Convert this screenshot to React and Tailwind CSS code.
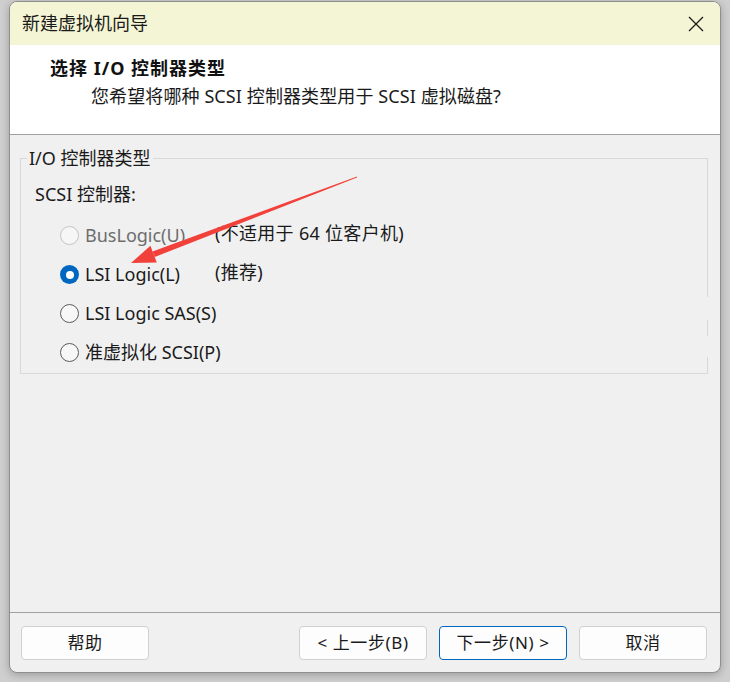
import React from 'react';

const font = { fontFamily: '"Noto Sans", "Noto Sans CJK SC", sans-serif' };

function Radio({ checked, disabled }) {
  if (checked) {
    return (
      <span className="w-[19px] h-[19px] rounded-full bg-[#0067c0] flex items-center justify-center shrink-0">
        <span className="w-[8px] h-[8px] rounded-full bg-white" />
      </span>
    );
  }
  return (
    <span
      className={
        'w-[19px] h-[19px] rounded-full border shrink-0 ' +
        (disabled ? 'border-[#c4c4c4] bg-[#f6f6f6]' : 'border-[#5c5c5c] bg-[#f7f7f7]')
      }
    />
  );
}

function Option({ label, note, checked, disabled }) {
  return (
    <div className="flex items-center h-[39px]">
      <div className="w-[194px] flex items-center gap-[6px] pl-[39px] shrink-0">
        <Radio checked={checked} disabled={disabled} />
        <span className={'whitespace-nowrap ' + (disabled ? 'text-[#6d6d6d]' : 'text-[#1a1a1a]')}>{label}</span>
      </div>
      {note && <span className="-mt-[5px] text-[#1a1a1a] whitespace-nowrap tracking-[0.3px]">{note}</span>}
    </div>
  );
}

function Btn({ children, primary }) {
  return (
    <button
      className={
        'w-[128px] h-[34px] rounded-[4px] bg-[#fdfdfd] text-[17px] text-[#1a1a1a] tracking-[0.6px] border ' +
        (primary ? 'border-[#0067c0]' : 'border-[#d0d0d0]')
      }
    >
      {children}
    </button>
  );
}

export default function App() {
  return (
    <div className="w-[730px] h-[682px] bg-[#cfcfcf] pl-[9px] pt-[1px] relative overflow-hidden" style={font}>
      <div className="w-[712px] h-[672px] rounded-[8px] border border-[#8f8f8f] bg-[#f0f0f0] overflow-hidden flex flex-col shadow-[0_2px_8px_rgba(0,0,0,0.25)]">
        {/* title bar */}
        <div className="h-[43px] bg-[#f4f5d4] flex items-center justify-between pl-[12px] pr-[16px] shrink-0">
          <span className="text-[18px] text-[#1a1a1a]">新建虚拟机向导</span>
          <svg width="16" height="16" viewBox="0 0 16 16" className="text-[#1a1a1a]">
            <path d="M1 1 L15 15 M15 1 L1 15" stroke="currentColor" strokeWidth="1.3" fill="none" />
          </svg>
        </div>

        {/* header */}
        <div className="h-[90px] bg-white border-b border-[#a0a0a0] shrink-0 pl-[40px] pt-[11px]">
          <div className="text-[18px] font-bold text-[#111] leading-[24px] tracking-[1px]">选择 I/O 控制器类型</div>
          <div className="text-[18px] text-[#1a1a1a] leading-[24px] pl-[41px] mt-[4px] tracking-[0.1px]">您希望将哪种 SCSI 控制器类型用于 SCSI 虚拟磁盘?</div>
        </div>

        {/* body */}
        <div className="flex-1 px-[10px] pt-[23px] text-[18px]">
          <div className="relative border-l border-t border-b border-[#d9d9d9] h-[216px] mr-[2px] pt-[20px]">
            <span className="absolute -top-[13px] left-[6px] bg-[#f0f0f0] px-[2px] text-[18px] text-[#1a1a1a] leading-[24px]">I/O 控制器类型</span>
            <div className="absolute right-0 top-0 w-px flex flex-col h-full">
              <span className="h-[139px] bg-[#d9d9d9]" />
              <span className="h-[23px]" />
              <span className="h-[17px] bg-[#d9d9d9]" />
              <span className="h-[21px]" />
              <span className="h-[16px] bg-[#d9d9d9]" />
            </div>
            <div className="pl-[14px] text-[18px] text-[#1a1a1a] leading-[30px] mb-[7px]">SCSI 控制器:</div>
            <div>
              <Option label="BusLogic(U)" note="(不适用于 64 位客户机)" disabled />
              <Option label="LSI Logic(L)" note="(推荐)" checked />
              <Option label="LSI Logic SAS(S)" />
              <Option label="准虚拟化 SCSI(P)" />
            </div>
          </div>
        </div>

        {/* footer */}
        <div className="h-[60px] border-t border-[#a0a0a0] shrink-0 flex items-start pt-[13px] pl-[11px] pr-[13px]">
          <Btn>帮助</Btn>
          <div className="flex-1" />
          <div className="flex gap-[12px]">
            <Btn>{'< 上一步(B)'}</Btn>
            <Btn primary>{'下一步(N) >'}</Btn>
            <Btn>取消</Btn>
          </div>
        </div>
      </div>

      {/* red annotation arrow */}
      <svg className="absolute left-0 top-0 pointer-events-none" width="730" height="682">
        <polygon points="357,176.5 357,177.5 154.7,257 152.5,251.4" fill="#f2403b" />
        <polygon points="131,263 150.4,245.8 156.8,262.6" fill="#f2403b" />
      </svg>
    </div>
  );
}
